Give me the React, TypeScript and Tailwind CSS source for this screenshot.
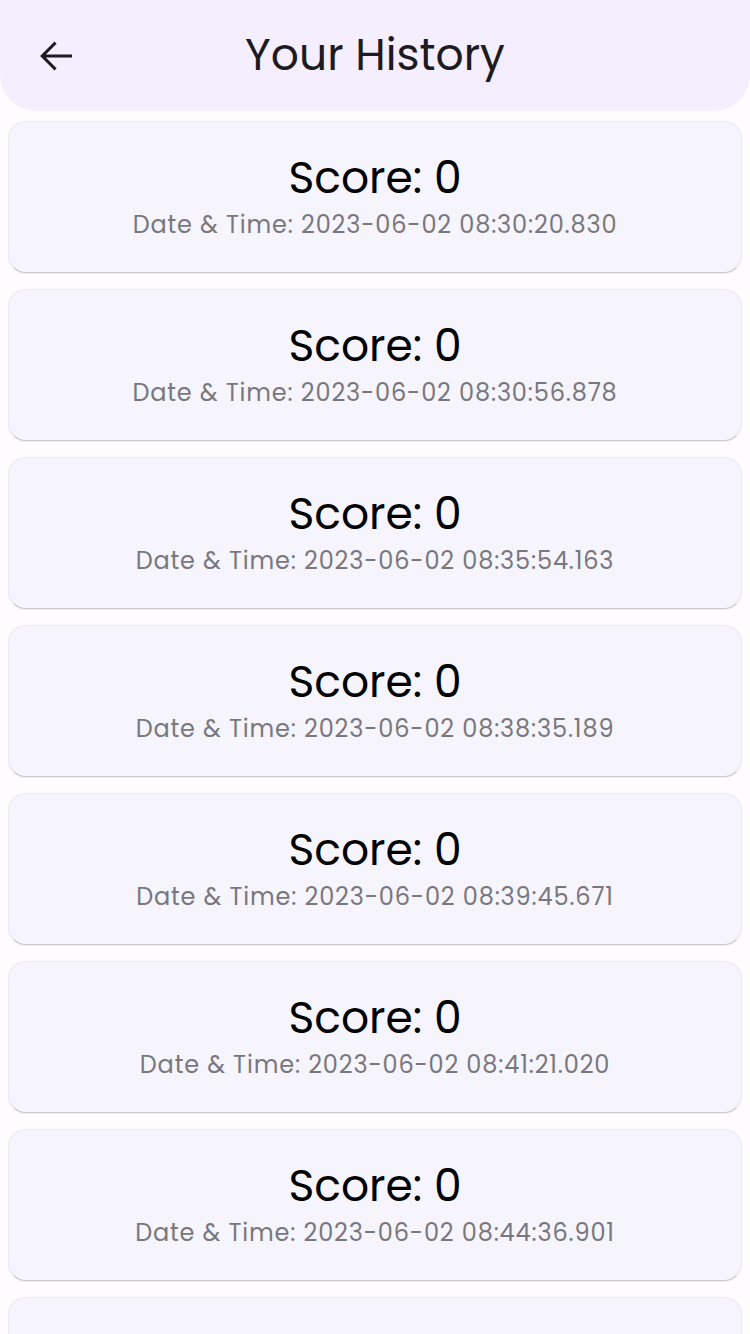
import React from "react";

const items = [
  "2023-06-02 08:30:20.830",
  "2023-06-02 08:30:56.878",
  "2023-06-02 08:35:54.163",
  "2023-06-02 08:38:35.189",
  "2023-06-02 08:39:45.671",
  "2023-06-02 08:41:21.020",
  "2023-06-02 08:44:36.901",
];

const cardCls =
  "h-[152px] shrink-0 rounded-[18px] bg-[#f6f4fc] border border-[#ebe9ef] border-b-[#c9c7ce] shadow-[0_1px_1px_rgba(0,0,0,0.06)] flex flex-col items-center pt-[25px]";

export default function App() {
  return (
    <div className="w-[750px] h-[1334px] overflow-hidden bg-[#fffbfe] font-['Poppins',sans-serif]">
      <header className="h-[111px] bg-[#f5eefe] rounded-b-[36px] flex items-center relative">
        <button className="absolute left-[32px] top-[32px] w-[48px] h-[48px] flex items-center justify-center">
          <svg width="48" height="48" viewBox="0 0 24 24" fill="#1d1b20">
            <path d="M20 11.25H6.9l5.4-5.4L11.25 4.8 4.05 12l7.2 7.2 1.05-1.05-5.4-5.4H20v-1.5z" />
          </svg>
        </button>
        <h1 className="w-full text-center text-[44px] leading-[62px] text-[#1d1b20] font-normal pb-[1px]">
          Your History
        </h1>
      </header>
      <div className="flex flex-col gap-[16px] px-[8px] pt-[10px]">
        {items.map((d, i) => (
          <div key={i} className={cardCls}>
            <div className="text-[44px] leading-[61px] text-black">Score: 0</div>
            <div className="text-[24px] leading-[34px] text-[#79777e] tracking-[0.85px]">
              Date &amp; Time: {d}
            </div>
          </div>
        ))}
        <div className={cardCls} />
      </div>
    </div>
  );
}
